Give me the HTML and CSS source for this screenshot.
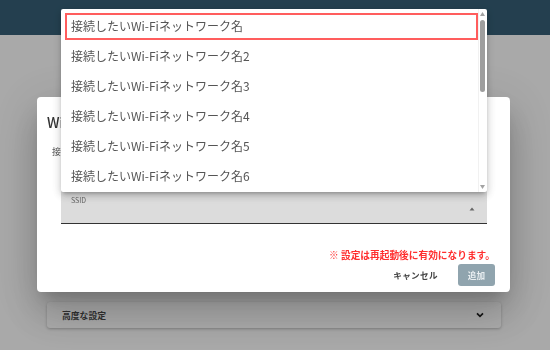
FILE: index.html
```html
<!DOCTYPE html>
<html lang="ja">
<head>
<meta charset="utf-8">
<title>Wi-Fi設定</title>
<link rel="stylesheet" href="styles.css">
</head>
<body>
<div class="page">
  <header class="topbar"></header>
  <main class="content">
    <section class="panel">
      <span class="panel-title">高度な設定</span>
      <svg class="chevron" width="8" height="6" viewBox="0 0 8 6"><path d="M1 1.3 L4 4.3 L7 1.3" fill="none" stroke="#1e1e1e" stroke-width="1.7"/></svg>
    </section>
  </main>
</div>

<div class="scrim"></div>

<div class="dialog">
  <h2 class="dialog-title">Wi-Fi</h2>
  <p class="dialog-label">接続先</p>
  <div class="field">
    <span class="field-label">SSID</span>
    <svg class="caret" width="6" height="4" viewBox="0 0 6 4"><path d="M0.5 3.5 L3 0.5 L5.5 3.5 Z" fill="#666"/></svg>
  </div>
  <p class="note">※ 設定は再起動後に有効になります。</p>
  <div class="actions">
    <button class="btn-text">キャンセル</button>
    <button class="btn-primary">追加</button>
  </div>
</div>

<div class="menu">
  <ul class="menu-list">
    <li class="menu-item is-focused">接続したいWi-Fiネットワーク名</li>
    <li class="menu-item">接続したいWi-Fiネットワーク名2</li>
    <li class="menu-item">接続したいWi-Fiネットワーク名3</li>
    <li class="menu-item">接続したいWi-Fiネットワーク名4</li>
    <li class="menu-item">接続したいWi-Fiネットワーク名5</li>
    <li class="menu-item">接続したいWi-Fiネットワーク名6</li>
  </ul>
  <div class="scrollbar">
    <svg class="sb-arrow" width="5" height="4" viewBox="0 0 5 4"><path d="M0 4 L2.5 0 L5 4 Z" fill="#a3a3a3"/></svg>
    <div class="sb-thumb"></div>
    <div class="sb-track"></div>
    <svg class="sb-arrow" width="5" height="4" viewBox="0 0 5 4"><path d="M0 0 L2.5 4 L5 0 Z" fill="#a3a3a3"/></svg>
  </div>
</div>
</body>
</html>
```

FILE: styles.css
```css
* { box-sizing: border-box; }

html, body {
  margin: 0;
  padding: 0;
  width: 550px;
  height: 350px;
  overflow: hidden;
  font-family: "Noto Sans CJK JP", "Noto Sans", sans-serif;
}

.page {
  width: 550px;
  height: 350px;
  background: #fafafa;
  display: flex;
  flex-direction: column;
}

.topbar {
  height: 35px;
  background: #355e75;
  flex: none;
}

.content {
  padding: 267px 49px 0 47px;
}

.panel {
  height: 26px;
  background: #ffffff;
  border-radius: 3px;
  box-shadow: 0 1px 3px rgba(0, 0, 0, 0.25);
  display: flex;
  align-items: center;
  justify-content: space-between;
  padding: 0 17px 0 15px;
}

.panel-title {
  font-size: 8.8px;
  font-weight: 700;
  color: #4a4a4a;
}

.chevron { display: block; }

.scrim {
  position: fixed;
  inset: 0;
  background: rgba(0, 0, 0, 0.32);
}

.dialog {
  position: fixed;
  left: 37px;
  top: 97px;
  width: 473px;
  height: 195px;
  background: #fff;
  border-radius: 4px;
  padding: 0 15px 0 10px;
  display: flex;
  flex-direction: column;
  box-shadow: 0 11px 15px -7px rgba(0,0,0,.2), 0 24px 38px 3px rgba(0,0,0,.14), 0 9px 46px 8px rgba(0,0,0,.12);
}

.dialog-title {
  margin: 17px 0 0 0;
  font-size: 14px;
  line-height: 16px;
  font-weight: 500;
  color: #333;
}

.dialog-label {
  margin: 16px 0 0 0;
  padding-left: 5px;
  font-size: 9px;
  line-height: 12px;
  color: #555;
}

.field {
  margin: 18px 8px 0 14px;
  height: 48px;
  background: #dcdcdc;
  border-bottom: 1px solid #333;
  border-radius: 3px 3px 0 0;
  padding: 20px 12px 0 10px;
  display: flex;
  justify-content: space-between;
  align-items: flex-start;
}

.field-label {
  font-size: 7px;
  line-height: 9px;
  color: #666;
}

.caret {
  display: block;
  margin-top: 11px;
}

.note {
  margin: 25px 0 0 0;
  font-size: 9.7px;
  line-height: 12px;
  font-weight: 700;
  color: #ff2e2e;
  text-align: right;
}

.actions {
  margin-top: 3px;
  display: flex;
  justify-content: flex-end;
  align-items: center;
  gap: 20px;
}

.btn-text, .btn-primary {
  font-family: inherit;
  border: 0;
  margin: 0;
  font-weight: 700;
  font-size: 8.6px;
  height: 22px;
  line-height: 22px;
}

.btn-text {
  background: transparent;
  color: #444;
  padding: 0;
  letter-spacing: 0.3px;
}

.btn-primary {
  background: #90a4ae;
  color: #e9eef1;
  padding: 0 10px;
  border-radius: 3px;
}

.menu {
  position: fixed;
  left: 61px;
  top: 9px;
  width: 426px;
  height: 183px;
  background: #fff;
  border-radius: 2px;
  display: flex;
  overflow: hidden;
  box-shadow: 0 3px 4px -2px rgba(0,0,0,.25), 0 4px 8px 0 rgba(0,0,0,.12), 0 1px 10px 1px rgba(0,0,0,.1);
}

.menu-list {
  flex: 1;
  list-style: none;
  margin: 0;
  padding: 2px 0 0 0;
  overflow: hidden;
}

.menu-item {
  position: relative;
  height: 30px;
  line-height: 30px;
  padding-left: 10px;
  font-size: 12px;
  color: #555;
  white-space: nowrap;
}

.menu-item.is-focused::after {
  content: "";
  position: absolute;
  left: 4px;
  right: 0;
  top: 2px;
  bottom: 1px;
  border: 2px solid #ff5d5d;
}

.scrollbar {
  width: 9px;
  flex: none;
  display: flex;
  flex-direction: column;
  padding: 3px 0 3px 1px;
  border-left: 1px solid #f1f1f1;
}

.sb-arrow { display: block; }

.sb-thumb {
  margin-top: 4px;
  width: 5px;
  height: 72px;
  background: #9e9e9e;
  border-radius: 3px;
}

.sb-track { flex: 1; }
```
